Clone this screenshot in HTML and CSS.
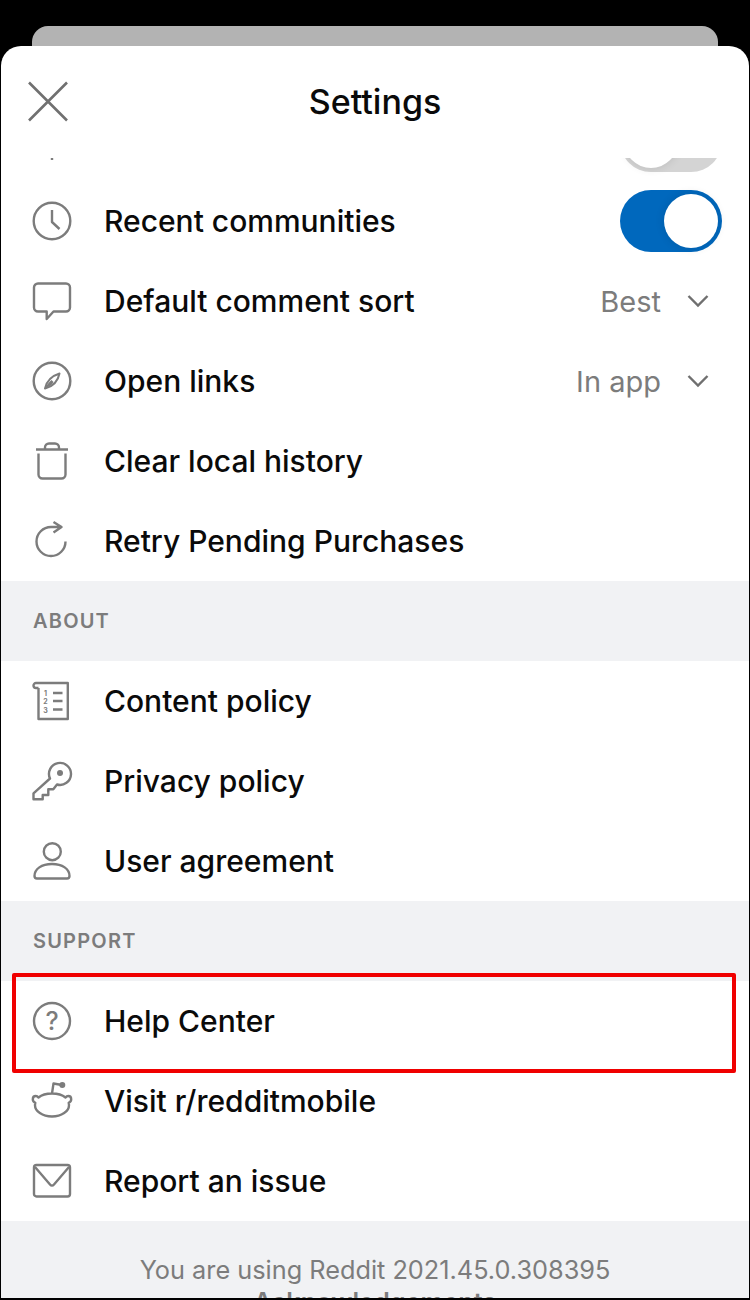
FILE: index.html
```html
<!DOCTYPE html>
<html lang="en">
<head>
<meta charset="UTF-8">
<meta name="viewport" content="width=device-width, initial-scale=1.0">
<title>Settings</title>
<link rel="stylesheet" href="styles.css">
</head>
<body>

<div class="back-card"></div>

<div class="sheet">
    <div class="header">
        <svg class="close" viewBox="0 0 42 42"><path d="M2 1.500l38 38M40 1.500l-38 38"/></svg>
        <h1>Settings</h1>
    </div>

    <div class="list">
        <div class="row first-row">
            <svg class="icon" viewBox="0 0 40 40"><path d="M20 36.500v2.500"/></svg>
            <div class="toggle"><span class="knob"></span></div>
        </div>
        <div class="row">
            <svg class="icon" viewBox="0 0 40 40"><circle cx="20" cy="20" r="18.300"/><path d="M20 9v12l7.500 7"/></svg>
            <span class="label">Recent communities</span>
            <div class="toggle on"><span class="knob"></span></div>
        </div>
        <div class="row">
            <svg class="icon" viewBox="0 0 40 40"><path d="M6 2.500h28a4 4 0 0 1 4 4v20a4 4 0 0 1-4 4H21.500L14.700 38v-7.500H6a4 4 0 0 1-4-4v-20a4 4 0 0 1 4-4z"/></svg>
            <span class="label">Default comment sort</span>
            <span class="value">Best</span>
            <svg class="chevron" viewBox="0 0 22 14"><path d="M1.500 2L11 11.500 20.500 2"/></svg>
        </div>
        <div class="row">
            <svg class="icon" viewBox="0 0 40 40"><circle cx="20" cy="20" r="18.300"/><path class="thin" d="M13 27.500c1.500-7 6.500-12.500 14.500-15-1.500 7.500-6.500 13-14.500 15z"/><path class="solid" d="M13 27.500c1.500-3.500 4-6.500 6.500-8.500l2 2c-2 3-5 5.500-8.500 6.500z"/></svg>
            <span class="label">Open links</span>
            <span class="value">In app</span>
            <svg class="chevron" viewBox="0 0 22 14"><path d="M1.500 2L11 11.500 20.500 2"/></svg>
        </div>
        <div class="row">
            <svg class="icon" viewBox="0 0 40 40"><path d="M4 8.500h32M13 8V6.500a4 4 0 0 1 4-4h6a4 4 0 0 1 4 4V8M6.500 12.500v21a4 4 0 0 0 4 4h19a4 4 0 0 0 4-4v-21"/></svg>
            <span class="label">Clear local history</span>
        </div>
        <div class="row">
            <svg class="icon" viewBox="0 0 40 40"><path d="M33.500 20.500A14.500 14.500 0 1 1 19 6h10M21.500 1l8 5-8 5.500"/></svg>
            <span class="label">Retry Pending Purchases</span>
        </div>

        <div class="section">ABOUT</div>
        <div class="row">
            <svg class="icon" viewBox="0 0 40 40"><path d="M6.500 7v31h29.300V2H4a2.500 2.500 0 0 0-2.500 2.500C1.500 6 2.500 7 4 7h2.500M21 12h9.500M21 20h9.500M21 28.500h9.500"/><text class="digit" x="13.500" y="14.500">1</text><text class="digit" x="13.500" y="23">2</text><text class="digit" x="13.500" y="31.500">3</text></svg>
            <span class="label">Content policy</span>
        </div>
        <div class="row">
            <svg class="icon" viewBox="0 0 40 40"><path d="M18 17.500A11 11 0 1 1 25 23.500L21.300 28.300H16.300V34H10.700V38.300H1.500V32.300L18 17.500z"/><circle class="dot" cx="28" cy="12" r="3"/></svg>
            <span class="label">Privacy policy</span>
        </div>
        <div class="row">
            <svg class="icon" viewBox="0 0 40 40"><circle cx="20.300" cy="10.700" r="8.500"/><path d="M5 37.500h30a2.500 2.500 0 0 0 2.500-2.500c0-7-7-12-17.500-12S2.500 28 2.500 35A2.500 2.500 0 0 0 5 37.500z"/></svg>
            <span class="label">User agreement</span>
        </div>

        <div class="section">SUPPORT</div>
        <div class="row">
            <svg class="icon" viewBox="0 0 40 40"><circle cx="20" cy="20" r="18"/><text class="mark" x="20" y="28.500">?</text></svg>
            <span class="label">Help Center</span>
        </div>
        <div class="row">
            <svg class="icon" viewBox="0 0 40 40"><path d="M20 12.500c5.500 0 10.500 1.500 13.500 4 .8-1 1.600-1.500 2.700-1.500 1.800 0 3 1.400 3 3.200 0 1.600-.9 2.800-2.500 3.600.2 1 .3 1.600.3 2.400 0 6-7.300 11.300-17 11.300S3 30.200 3 24.200c0-.8.100-1.400.3-2.400C1.700 21 .8 19.800.8 18.200c0-1.800 1.200-3.200 3-3.200 1.100 0 1.900.5 2.700 1.500 3-2.500 8-4 13.500-4zM20 12.500l1.500-10 8.500 1.500"/><circle class="dot" cx="30.300" cy="4" r="3"/></svg>
            <span class="label">Visit r/redditmobile</span>
        </div>
        <div class="row">
            <svg class="icon" viewBox="0 0 40 40"><rect x="2" y="4" width="36" height="31.500" rx="2.500"/><path d="M3 6l15 17.500q2 2.300 4 0L37 6"/></svg>
            <span class="label">Report an issue</span>
        </div>

        <div class="footer">
            <p>You are using Reddit 2021.45.0.308395</p>
            <p class="ack">Acknowledgements</p>
        </div>
    </div>
</div>

<div class="highlight"></div>

</body>
</html>
```

FILE: styles.css
```css
html, body {
    height: 1300px;
    overflow: hidden;
}
body {
    background-color: #000000;
    color: #0a0a0a;
    font-family: Inter, "Noto Sans", sans-serif;
    margin: 0;
    padding: 0;
    position: relative;
}
.back-card {
    height: 20px;
    margin: 26px 32px 0;
    background-color: #b3b3b3;
    border-radius: 16px 16px 0 0;
}
.sheet {
    height: 1252px;
    margin: 0 1px;
    background-color: #ffffff;
    border-radius: 20px 20px 0 0;
    overflow: hidden;
    display: flex;
    flex-direction: column;
}
.header {
    flex: none;
    display: grid;
    grid-template-columns: 1fr auto 1fr;
    align-items: center;
    height: 42px;
    padding: 35px 26px;
}
.header h1 {
    grid-column: 2;
    grid-row: 1;
    margin: -2px 0 0;
    font-size: 34px;
    font-weight: 500;
}
.close {
    grid-column: 1;
    grid-row: 1;
    width: 42px;
    height: 42px;
}
.close path {
    fill: none;
    stroke: #707070;
    stroke-width: 2.6;
}
.list {
    flex: 1;
    overflow: hidden;
}
.row {
    display: flex;
    align-items: center;
    height: 80px;
    padding: 0 27px 0 31px;
}
.first-row {
    margin-top: -57px;
}
.first-row .toggle {
    margin-left: auto;
}
.icon {
    flex: none;
    width: 40px;
    height: 40px;
    margin-right: 33px;
    overflow: visible;
}
.icon circle, .icon path, .icon rect {
    fill: none;
    stroke: #7c7c7c;
    stroke-width: 2.4;
    stroke-linejoin: round;
}
.icon .dot, .icon .solid {
    fill: #7c7c7c;
    stroke: none;
}
.icon .thin {
    stroke-width: 2;
}
.digit {
    font-size: 7px;
    font-weight: 700;
    fill: #7c7c7c;
    text-anchor: middle;
}
.mark {
    font-size: 25px;
    font-weight: 500;
    fill: #7c7c7c;
    text-anchor: middle;
}
.label {
    flex: 1;
    margin-left: -1px;
    font-size: 30px;
    font-weight: 500;
}
.value {
    font-size: 29px;
    color: #7c7c7c;
    margin-right: 26px;
}
.chevron {
    flex: none;
    width: 22px;
    height: 14px;
    margin-right: 13px;
}
.chevron path {
    fill: none;
    stroke: #6f6f6f;
    stroke-width: 2.4;
}
.toggle {
    flex: none;
    width: 102px;
    height: 62px;
    padding: 4px;
    box-sizing: border-box;
    border-radius: 31px;
    background-color: #d4d4d4;
}
.toggle.on {
    background-color: #0068bd;
    display: flex;
    justify-content: flex-end;
}
.knob {
    display: block;
    width: 54px;
    height: 54px;
    border-radius: 50%;
    background-color: #ffffff;
    box-shadow: 0 0 10px rgba(0, 0, 0, 0.12);
}
.section {
    height: 80px;
    line-height: 80px;
    padding-left: 32px;
    background-color: #f1f2f4;
    color: #7c7c7c;
    font-size: 20px;
    font-weight: 600;
    letter-spacing: 1.2px;
}
.footer {
    padding-top: 33px;
    height: 200px;
    background-color: #f1f2f4;
    color: #7c7c7c;
    font-size: 25.3px;
    text-align: center;
}
.footer p {
    margin: 0;
    line-height: 32px;
}
.footer .ack {
    font-weight: 600;
}
.highlight {
    position: absolute;
    left: 12px;
    top: 973px;
    width: 716px;
    height: 92px;
    border: 4px solid #f00000;
    border-radius: 2px;
}
```
